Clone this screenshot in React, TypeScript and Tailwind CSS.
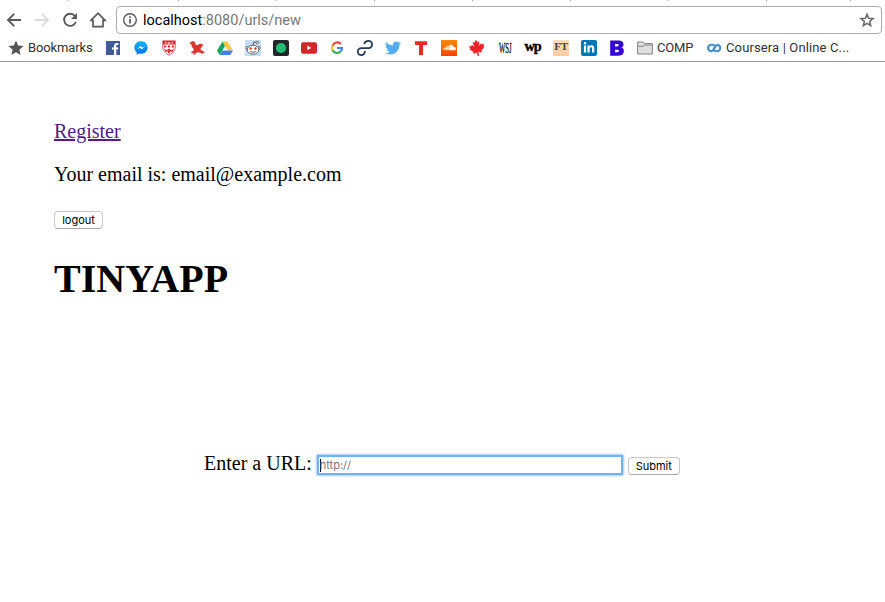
import type { ReactNode } from "react";
import { FaTwitter, FaSoundcloud, FaCanadianMapleLeaf, FaLinkedinIn } from "react-icons/fa";

function Slot({ children }: { children: ReactNode }) {
  return <div className="flex h-4 w-4 shrink-0 items-center justify-center">{children}</div>;
}

function Svg({ children }: { children: ReactNode }) {
  return (
    <svg width="16" height="16" viewBox="0 0 16 16" fill="none" className="block shrink-0">
      {children}
    </svg>
  );
}

const ticks = [68, 178, 276, 374, 472, 570, 668, 766, 850];

function Toolbar() {
  return (
    <div className="flex h-[34px] items-end">
      <div className="flex h-7 w-[116px] shrink-0 items-center gap-3 pl-1.5">
        <Svg>
          <path d="M15 8H2M8.2 1.800 2 8l6.200 6.200" stroke="#5a5a5a" strokeWidth="1.900" />
        </Svg>
        <Svg>
          <path d="M1 8h13M7.800 1.800 14 8l-6.200 6.200" stroke="#dadada" strokeWidth="1.900" />
        </Svg>
        <Svg>
          <path d="M13 4A6.100 6.100 0 1 0 13.900 10" stroke="#5a5a5a" strokeWidth="1.900" />
          <path d="M15 1v6H9z" fill="#5a5a5a" />
        </Svg>
        <Svg>
          <path d="M.9 8.300 8 1.200l7.100 7.100H13v6.300H3V8.300z" stroke="#5a5a5a" strokeWidth="1.700" />
        </Svg>
      </div>
      <div className="flex h-7 w-[766px] items-center rounded-[4px] border border-[#adadad] bg-white pr-[6px] pl-[5px] font-['Roboto',sans-serif] text-[14.5px]">
        <Svg>
          <circle cx="8" cy="8" r="6.300" stroke="#5a5a5a" strokeWidth="1.400" />
          <path d="M8 7v4.500M8 4.200v1.700" stroke="#5a5a5a" strokeWidth="1.700" />
        </Svg>
        <span className="ml-[5px] grow pt-[2px] whitespace-nowrap text-[#777]">
          <span className="text-black">localhost</span>:8080/urls/new
        </span>
        <Svg>
          <path
            d="m8 2.200 1.600 4 4.400.3-3.400 2.900 1.100 4.200L8 11.300l-3.700 2.300 1.100-4.200L2 6.500l4.400-.3z"
            stroke="#666"
            strokeWidth="1.500"
          />
        </Svg>
      </div>
    </div>
  );
}

function Bookmarks() {
  return (
    <div className="flex h-[28px] items-center gap-3 border-b border-[#999] pl-2 font-['Roboto',sans-serif] text-[13px] whitespace-nowrap text-[#333]">
      <div className="flex w-[85px] items-center gap-1">
        <Svg>
          <path d="m8 .6 2.100 5 5.400.5-4.100 3.600 1.200 5.300L8 12.200 3.400 15l1.200-5.300L.5 6.100l5.400-.5z" fill="#555" />
        </Svg>
        <span className="tracking-[-0.13px]">Bookmarks</span>
      </div>
      <Slot>
        <div className="flex h-3.5 w-3.5 items-center bg-[#415a99]">
          <svg width="14" height="14" viewBox="0 0 14 14">
            <path d="M8 14V8.600H6V6.500h2V5c0-2 1.200-3 3-3h1.400v2H11.300c-.8 0-1 .4-1 1v1.500h2.100L12 8.600h-1.700V14z" fill="#fff" />
          </svg>
        </div>
      </Slot>
      <Svg>
        <defs>
          <linearGradient id="msg" x1="0" y1="0" x2="0" y2="1">
            <stop stopColor="#00b7ff" />
            <stop offset="1" stopColor="#006dff" />
          </linearGradient>
        </defs>
        <path d="M8 1.300c-3.800 0-6.600 2.700-6.600 6.200 0 2 .9 3.600 2.300 4.700v2.500l2.300-1.200c.6.200 1.300.3 2 .3 3.800 0 6.600-2.800 6.600-6.300S11.800 1.300 8 1.300z" fill="url(#msg)" />
        <path d="m3.900 9.400 3.500-3.600 1.900 1.800 3-1.800-3.600 3.600L7 7.700z" fill="#fff" />
      </Svg>
      <Svg>
        <path d="M1.700.8h12.600v5.700c0 4-2.700 6.800-6.300 8.700-3.600-1.900-6.300-4.700-6.300-8.700z" fill="#fff" stroke="#ef3037" strokeWidth=".8" />
        <path d="M2 1h12v3.500H2z" fill="#ef2730" />
        <path d="M4 2.200h1.500v1.100H4zM6.800 2.600h2.400v1.200H6.800zM10.500 2.200H12v1.100h-1.500z" fill="#fff" />
        <path d="M3 5.600h2.200v2H3zM6.900 5.600h2.200v2H6.900zM10.800 5.600H13v2h-2.200z" fill="#ef2730" />
        <path d="m3 8.600 2.400 1.600L8 8.500l2.600 1.700L13 8.600l-1.700 3.600-1.500-1.200L8 14l-1.800-3-1.500 1.200z" fill="#ef2730" />
      </Svg>
      <Svg>
        <path d="m.4 2.800 1.800-1 1.500-.7L6 2.300l.4 2.200 2 .5 2-.9 3.200-.3-.3 1.200 1.300.7-1.800.7-.4 1.500-1.300 1 1.200 1.300 3 1.800.2 1.300-1.900-.4-.6 1.300-1.500-1.400-2.700-.6-2 .9-.6 1.500-2-.2.8-1.600-2 .7-1-1.500 2-1L5 9.500 2.800 6.800 2.600 4.700z" fill="#dc342f" />
      </Svg>
      <Svg>
        <path d="M5.500 1.500h5L16 10.500h-5.200z" fill="#fbcb3d" />
        <path d="M5.500 1.500 8 6 2.700 15 0 10.500z" fill="#16a366" />
        <path d="M5.500 10.500H16L13.200 15H2.700z" fill="#3e83ee" />
      </Svg>
      <Slot>
        <div className="h-4 w-4 bg-[#c4def5]">
          <Svg>
            <path d="m8 5 .8-3 3.200.4" stroke="#444" strokeWidth=".8" />
            <circle cx="2.300" cy="8" r="1.500" fill="#fff" stroke="#444" strokeWidth=".8" />
            <circle cx="13.700" cy="8" r="1.500" fill="#fff" stroke="#444" strokeWidth=".8" />
            <circle cx="12.400" cy="2.500" r="1.200" fill="#fff" stroke="#444" strokeWidth=".8" />
            <ellipse cx="8" cy="9.700" rx="5.800" ry="4.500" fill="#fff" stroke="#444" strokeWidth=".8" />
            <circle cx="5.600" cy="8.500" r="1.250" fill="#ff3c0c" />
            <circle cx="10.400" cy="8.500" r="1.250" fill="#ff3c0c" />
            <path d="M5.300 11.500q2.700 1.700 5.400 0" stroke="#444" strokeWidth=".9" />
          </Svg>
        </div>
      </Slot>
      <Svg>
        <rect width="16" height="16" rx="2" fill="#22252a" />
        <circle cx="8" cy="8" r="5.100" fill="#21bd73" />
      </Svg>
      <Svg>
        <rect y="2.300" width="16" height="11.400" rx="2" fill="#d3262b" />
        <path d="M6.300 5.600v4.600l4-2.300z" fill="#fff" />
      </Svg>
      <Svg>
        <path d="M12 4A5 5 0 0 0 3.600 5.700" stroke="#ea4335" strokeWidth="2.100" />
        <path d="M3.600 5.700a5 5 0 0 0 0 4.600" stroke="#fbbc05" strokeWidth="2.100" />
        <path d="M3.600 10.300A5 5 0 0 0 11.500 11.600" stroke="#34a853" strokeWidth="2.100" />
        <path d="M8 8h5.100c0 1.600-.5 2.700-1.600 3.600" stroke="#4285f4" strokeWidth="2.100" />
      </Svg>
      <Svg>
        <path
          d="M7.300 4.200C7.600 2.200 9.400.9 11.500.9a3.600 3.600 0 0 1 0 7.200H4.300a3.500 3.500 0 1 0 3.500 3.500V11"
          stroke="#243b55"
          strokeWidth="1.800"
        />
      </Svg>
      <Slot>
        <FaTwitter size={16} className="text-[#55acee]" />
      </Slot>
      <Svg>
        <path d="M2 1.200h12V5h-4v10H6V5H2z" fill="#e82b22" />
      </Svg>
      <Slot>
        <div className="flex h-4 w-4 items-center justify-center bg-linear-to-b from-[#ff8800] to-[#ff3a00] text-white">
          <FaSoundcloud size={13} />
        </div>
      </Slot>
      <Slot>
        <FaCanadianMapleLeaf size={16} className="shrink-0 rotate-[-10deg] stroke-[#ee2026] text-[#ee2026] [stroke-width:20]" />
      </Slot>
      <Slot>
        <span className="scale-x-[0.56] scale-y-[1.15] font-['Liberation_Serif',serif] text-[12px] text-[#111] [-webkit-text-stroke:0.3px_#111]">WSJ</span>
      </Slot>
      <Slot>
        <span className="-mt-[3px] scale-x-[0.95] font-['Liberation_Serif',serif] text-[15px] leading-4 font-bold tracking-[-1px] text-black [-webkit-text-stroke:0.4px_black]">
          wp
        </span>
      </Slot>
      <Slot>
        <div className="flex h-4 w-4 items-start justify-center bg-linear-to-b from-[#ffddb8] to-[#f8cc9f] font-['Liberation_Serif',serif] text-[11px] leading-[12px] font-bold tracking-[-0.3px] text-[#444]">
          FT
        </div>
      </Slot>
      <Slot>
        <div className="flex h-4 w-4 items-center justify-center rounded-[2px] bg-[#0077b5] text-white">
          <FaLinkedinIn size={12} />
        </div>
      </Slot>
      <Svg>
        <path
          d="M1.200.4h8.500c3 0 4.800 1.500 4.800 4 0 1.600-.8 2.700-2.200 3.200 1.700.5 2.600 1.700 2.600 3.500 0 2.900-2 4.700-5.300 4.700H1.200zM6 4v2.400h2.200c.9 0 1.400-.4 1.400-1.200S9.100 4 8.200 4zM6 9.700v2.500h2.300c1 0 1.500-.4 1.500-1.200s-.5-1.300-1.500-1.300z"
          fill="#3300dd"
          fillRule="evenodd"
        />
      </Svg>
      <div className="flex w-[57px] items-center gap-1">
        <Svg>
          <path d="M.6 14V2h5.800L7.500 3.600h7.900V14z" fill="#dedede" stroke="#858585" />
          <path d="M1 6.300h5.500l1-1.300H15" stroke="#858585" />
        </Svg>
        <span className="tracking-[-0.15px]">COMP</span>
      </div>
      <div className="flex items-center gap-1">
        <Svg>
          <path
            d="M9.200 6.300C7.600 4.500 4.800 4.300 3.200 5.600a3.100 3.100 0 0 0 0 4.800c2 1.500 4 .7 5.200-2.400 1.200-3 3.200-3.800 4.800-2.400a3.200 3.200 0 0 1 0 4.800c-1.700 1.200-4.500.9-6-.8"
            stroke="#4690d0"
            strokeWidth="2.200"
          />
        </Svg>
        <span className="tracking-[0.13px]">Coursera | Online C...</span>
      </div>
    </div>
  );
}

function Page() {
  return (
    <main className="flex flex-col items-start pt-[58px] pl-[54px] font-['Liberation_Serif',serif] text-[20px] leading-[23px] text-black">
      <a className="text-[#551a8b] underline decoration-2">Register</a>
      <p className="mt-5">Your email is: email@example.com</p>
      <button className="mt-[25px] h-[18px] w-[49px] rounded-[4px] border border-[#c8c8c8] border-b-[#aaa] bg-white font-['Inter',sans-serif] text-[11px] leading-[16px]">
        logout
      </button>
      <h1 className="mt-[27px] text-[40px] leading-[46px] font-bold">TINYAPP</h1>
      <form className="mt-[146px] ml-[150px] flex h-[30px] items-center">
        <label className="mr-[5px] whitespace-nowrap">Enter a URL:</label>
        <div className="mt-[4px] flex h-5 w-[306px] items-center rounded-[1px] border-2 border-[#73b0f5] bg-white pl-px shadow-[0_0_2px_1px_#a4cefa]">
          <span className="h-[13px] w-px bg-black" />
          <span className="-ml-px pt-px font-['Inter',sans-serif] text-[11px] text-[#777]">http://</span>
        </div>
        <button
          type="button"
          className="mt-[6px] ml-[5px] h-[18px] w-[52px] rounded-[4px] border border-[#c8c8c8] border-b-[#aaa] bg-white font-['Inter',sans-serif] text-[11px] leading-[16px]"
        >
          Submit
        </button>
      </form>
    </main>
  );
}

export default function App() {
  return (
    <div className="h-[602px] w-[885px] overflow-hidden bg-white">
      <header className="relative">
        {ticks.map((x) => (
          <span key={x} className="absolute top-0 h-px w-px bg-[#aaa]" style={{ left: x }} />
        ))}
        <Toolbar />
        <Bookmarks />
      </header>
      <Page />
    </div>
  );
}
